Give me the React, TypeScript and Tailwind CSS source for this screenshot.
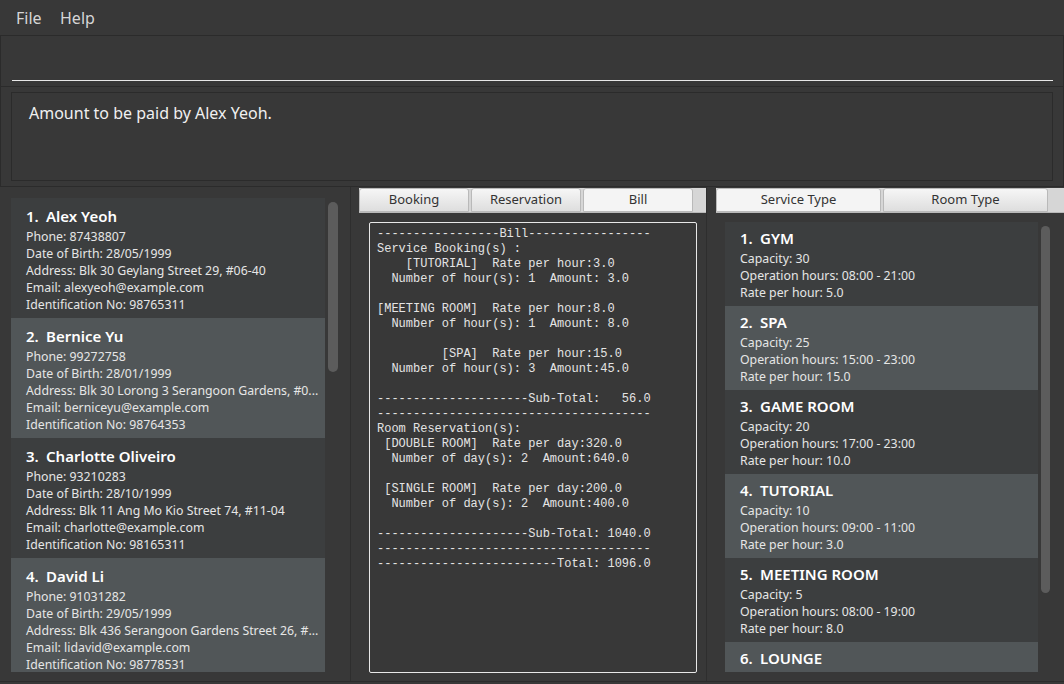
import React from "react";

const persons = [
  {
    name: "Alex Yeoh",
    phone: "87438807",
    dob: "28/05/1999",
    address: "Blk 30 Geylang Street 29, #06-40",
    email: "alexyeoh@example.com",
    id: "98765311",
  },
  {
    name: "Bernice Yu",
    phone: "99272758",
    dob: "28/01/1999",
    address: "Blk 30 Lorong 3 Serangoon Gardens, #0...",
    email: "berniceyu@example.com",
    id: "98764353",
  },
  {
    name: "Charlotte Oliveiro",
    phone: "93210283",
    dob: "28/10/1999",
    address: "Blk 11 Ang Mo Kio Street 74, #11-04",
    email: "charlotte@example.com",
    id: "98165311",
  },
  {
    name: "David Li",
    phone: "91031282",
    dob: "29/05/1999",
    address: "Blk 436 Serangoon Gardens Street 26, #...",
    email: "lidavid@example.com",
    id: "98778531",
  },
];

const services = [
  { name: "GYM", cap: 30, hours: "08:00 - 21:00", rate: "5.0" },
  { name: "SPA", cap: 25, hours: "15:00 - 23:00", rate: "15.0" },
  { name: "GAME ROOM", cap: 20, hours: "17:00 - 23:00", rate: "10.0" },
  { name: "TUTORIAL", cap: 10, hours: "09:00 - 11:00", rate: "3.0" },
  { name: "MEETING ROOM", cap: 5, hours: "08:00 - 19:00", rate: "8.0" },
  { name: "LOUNGE", cap: 15, hours: "10:00 - 22:00", rate: "6.0" },
];

const bill = `-----------------Bill-----------------
Service Booking(s) :
    [TUTORIAL]  Rate per hour:3.0
  Number of hour(s): 1  Amount: 3.0

[MEETING ROOM]  Rate per hour:8.0
  Number of hour(s): 1  Amount: 8.0

         [SPA]  Rate per hour:15.0
  Number of hour(s): 3  Amount:45.0

---------------------Sub-Total:   56.0
--------------------------------------
Room Reservation(s):
 [DOUBLE ROOM]  Rate per day:320.0
  Number of day(s): 2  Amount:640.0

 [SINGLE ROOM]  Rate per day:200.0
  Number of day(s): 2  Amount:400.0

---------------------Sub-Total: 1040.0
--------------------------------------
-------------------------Total: 1096.0`;

const ui = { fontFamily: '"Noto Sans", "Open Sans", sans-serif' };

function Tab({ label, active, width }: { label: string; active?: boolean; width: string }) {
  return (
    <div
      className={`${width} h-full flex items-center justify-center text-[13px] text-[#333333] border border-[#b9b9b9] rounded-t-[3px] ${
        active ? "bg-[#f4f4f4]" : "bg-gradient-to-b from-[#f6f6f6] to-[#dedede]"
      }`}
    >
      {label}
    </div>
  );
}

export default function App() {
  return (
    <div className="w-[1064px] h-[684px] bg-[#383838] flex flex-col overflow-hidden text-[#e6e6e6]" style={ui}>
      {/* Menu bar */}
      <div className="h-[36px] flex items-center pl-[16px] text-[16px] text-[#d6d6d6] border-b border-[#2b2b2b] shrink-0">
        <span className="w-[44px]">File</span>
        <span>Help</span>
      </div>

      {/* Command box */}
      <div className="h-[51px] border-x border-b border-[#2b2b2b] px-[11px] flex flex-col justify-end pb-[5px] shrink-0">
        <div className="h-px bg-[#e8e8e8] mr-[-1px]" />
      </div>

      {/* Result display */}
      <div className="h-[100px] border-x border-b border-[#2b2b2b] px-[10px] py-[5px] shrink-0">
        <div className="h-full border border-[#2b2b2b] pl-[17px] pt-[8px] text-[16px] text-[#f0f0f0]">
          Amount to be paid by Alex Yeoh.
        </div>
      </div>

      {/* Panes */}
      <div className="flex flex-1 min-h-0 border-b border-[#2b2b2b]">
        {/* Persons */}
        <div className="w-[351px] border-r border-[#2e2e2e] flex pl-[11px] pt-[11px] gap-[3px] shrink-0">
          <div className="w-[314px] h-[474px] flex flex-col overflow-hidden">
            {persons.map((p, i) => (
              <div
                key={p.name}
                className={`h-[120px] shrink-0 pl-[15px] pr-[8px] pt-[6px] overflow-hidden ${
                  i % 2 === 0 ? "bg-[#3c3e3f]" : "bg-[#515658]"
                }`}
              >
                <div className="h-[24px] flex items-center text-[15px] font-semibold text-white">
                  <span className="w-[20px]">{i + 1}.</span>
                  <span>{p.name}</span>
                </div>
                <div className="text-[12.3px] leading-[17px] whitespace-nowrap">
                  <div>Phone: {p.phone}</div>
                  <div>Date of Birth: {p.dob}</div>
                  <div>Address: {p.address}</div>
                  <div>Email: {p.email}</div>
                  <div>Identification No: {p.id}</div>
                </div>
              </div>
            ))}
          </div>
          <div className="pt-[4px]">
            <div className="w-[10px] h-[170px] rounded-full bg-[#5c5c5c]" />
          </div>
        </div>

        {/* Bill */}
        <div className="w-[356px] border-r border-[#2e2e2e] pl-[8px] pt-[1px] flex flex-col shrink-0">
          <div className="h-[25px] flex gap-[2px] bg-[#d6d6d6] border-b border-[#b9b9b9]">
            <Tab label="Booking" width="w-[110px]" />
            <Tab label="Reservation" width="w-[110px]" />
            <Tab label="Bill" width="w-[110px]" active />
          </div>
          <div className="pl-[10px] pr-[9px] pt-[9px]">
            <div
              className="h-[451px] border border-[#e8e8e8] rounded-[2px] pl-[7px] pt-[4px] text-[12px] leading-[15px] text-[#e4e4e4] whitespace-pre"
              style={{ fontFamily: '"Liberation Mono", "Courier New", monospace' }}
            >
              {bill}
            </div>
          </div>
        </div>

        {/* Services */}
        <div className="flex-1 pl-[9px] pt-[1px] flex flex-col">
          <div className="h-[25px] flex gap-[2px] bg-[#d6d6d6] border-b border-[#b9b9b9]">
            <Tab label="Service Type" width="w-[165px]" active />
            <Tab label="Room Type" width="w-[165px]" />
          </div>
          <div className="flex pl-[9px] pt-[9px] gap-[3px] flex-1 min-h-0">
            <div className="w-[313px] h-[450px] flex flex-col overflow-hidden">
              {services.map((s, i) => (
                <div
                  key={s.name}
                  className={`h-[84px] shrink-0 pl-[15px] pt-[4px] ${
                    i % 2 === 0 ? "bg-[#3c3e3f]" : "bg-[#515658]"
                  }`}
                >
                  <div className="h-[24px] flex items-center text-[15px] font-semibold text-white">
                    <span className="w-[20px]">{i + 1}.</span>
                    <span>{s.name}</span>
                  </div>
                  <div className="text-[12.3px] leading-[17px] whitespace-nowrap">
                    <div>Capacity: {s.cap}</div>
                    <div>Operation hours: {s.hours}</div>
                    <div>Rate per hour: {s.rate}</div>
                  </div>
                </div>
              ))}
            </div>
            <div className="pt-[4px]">
              <div className="w-[9px] h-[367px] rounded-full bg-[#5c5c5c]" />
            </div>
          </div>
        </div>
      </div>
      <div className="h-[2px] shrink-0" />
    </div>
  );
}
